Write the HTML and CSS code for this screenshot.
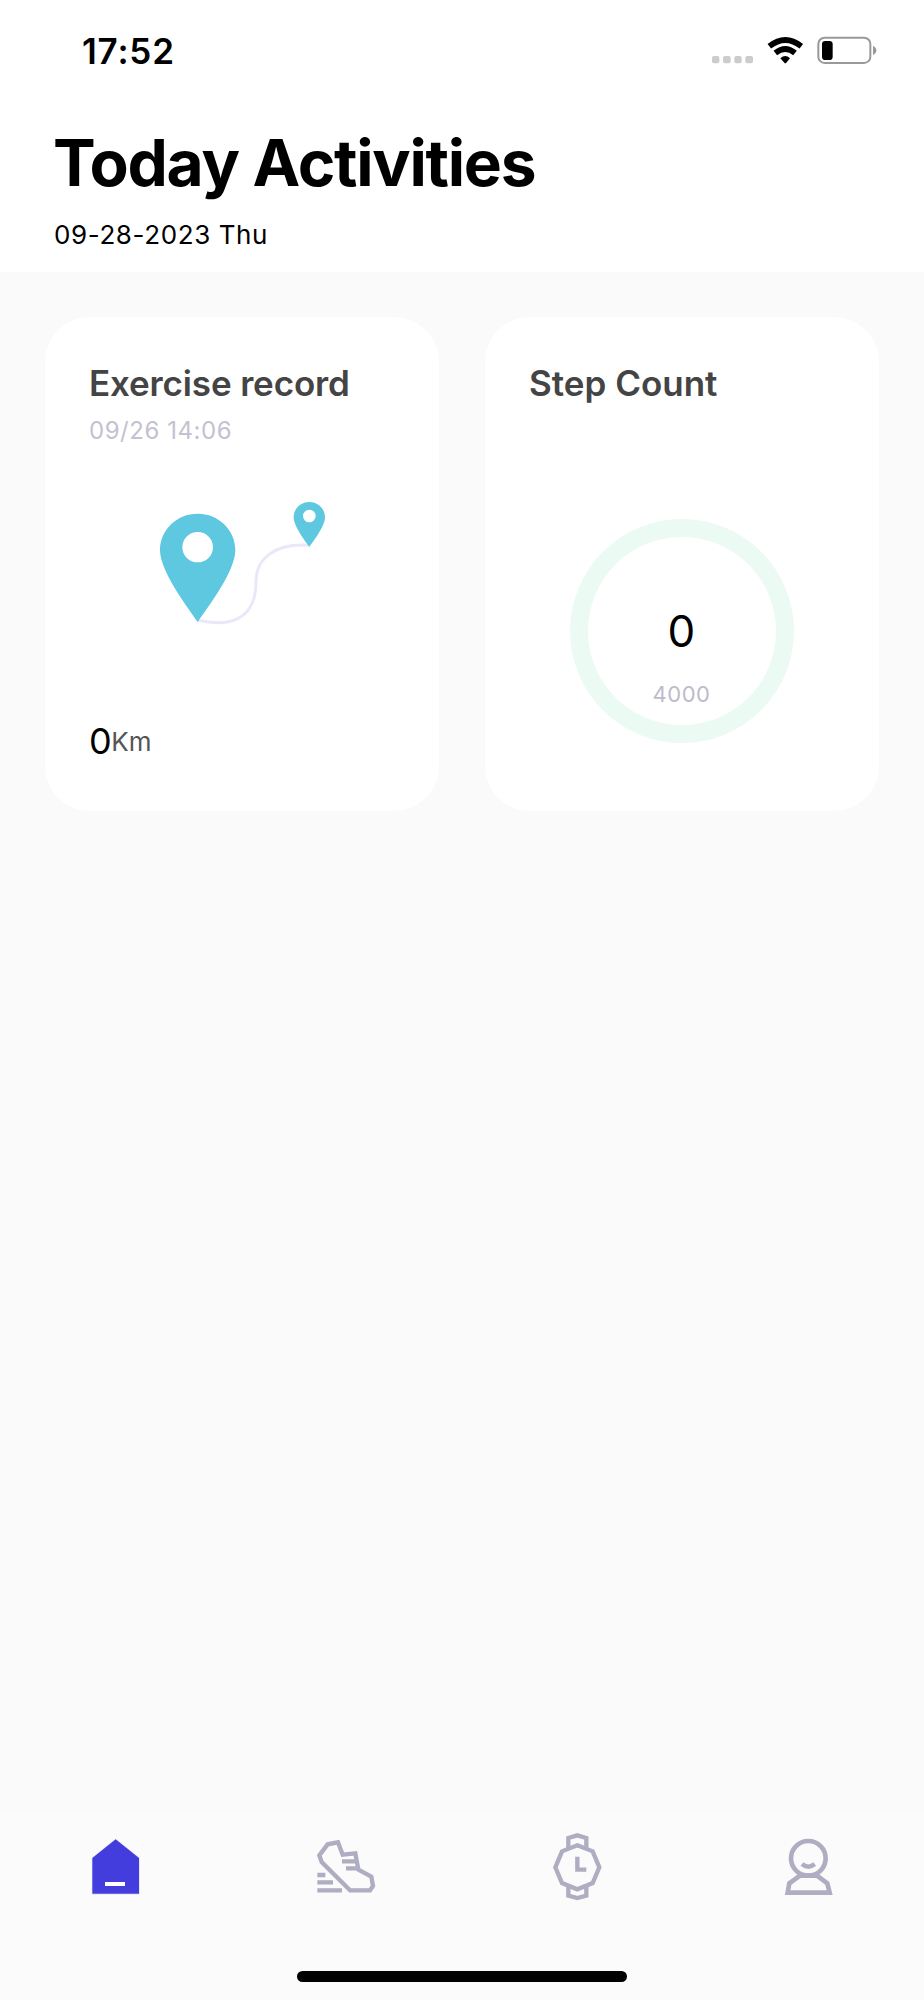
FILE: index.html
```html
<!DOCTYPE html>
<html lang="en">
<head>
<meta charset="utf-8">
<title>Today Activities</title>
<link rel="stylesheet" href="styles.css">
</head>
<body>
<div class="screen">
  <header class="header">
    <div class="status">
      <span class="time">17:52</span>
      <svg class="status-icons" viewBox="0 0 630 180" aria-hidden="true">
        <g fill="#ccc"><rect x="66" y="108" width="22" height="22" rx="6"/><rect x="99" y="108" width="23" height="22" rx="6"/><rect x="133" y="108" width="22" height="22" rx="6"/><rect x="166" y="108" width="23" height="22" rx="6"/></g>
        <g fill="none" stroke="#000" stroke-width="17"><path d="M238 79Q286 41 334 79"/><path d="M256 99Q286 75 315 99"/></g>
        <path d="M271 115Q286 101 300 115L289 128Q286 131 283 128Z"/>
        <rect x="385" y="53" width="156" height="76" rx="19" fill="none" stroke="#999" stroke-width="6"/>
        <rect x="396" y="63" width="32" height="57" rx="10"/>
        <path d="M549 77Q559 82 559 91T549 105Z" fill="#999"/>
      </svg>
    </div>
    <h1 class="title">Today Activities</h1>
    <p class="date">09-28-2023 Thu</p>
  </header>
  <main class="cards">
    <section class="card">
      <h2 class="card-title card-title-exercise">Exercise record</h2>
      <p class="card-sub">09/26 14:06</p>
      <svg class="route" viewBox="0 0 630 480" aria-hidden="true">
        <path d="M173 421C260 440 348 427 348 305C348 235 405 189 508 196" fill="none" stroke="#eae7fa" stroke-width="9"/>
        <path fill="#5ec8e0" fill-rule="evenodd" d="M173 426C139 378 60 272 60 211C60 149 111 101 173 101S286 149 286 211C286 272 207 378 173 426ZM173 156a46 45.500 0 1 0 0 91a46 45.500 0 1 0 0-91Z"/>
        <path fill="#5ec8e0" fill-rule="evenodd" d="M508 201C494 181 461 138 461 112C461 86 482 66 508 66S555 86 555 112C555 138 522 181 508 201ZM508 89a19 19 0 1 0 0 38a19 19 0 1 0 0-38Z"/>
      </svg>
      <p class="distance"><span class="distance-value">0</span><span class="distance-unit">Km</span></p>
    </section>
    <section class="card">
      <h2 class="card-title card-title-steps">Step Count</h2>
      <div class="ring">
        <span class="steps">0</span>
        <span class="goal">4000</span>
      </div>
    </section>
  </main>
  <footer class="footer">
    <nav class="nav">
      <a class="tab"><svg class="tab-icon" viewBox="3 60 270 270"><path fill="#fff" stroke="#dddcf8" stroke-width="3" d="M137 118L207.500 174V282H67V174Z"/><path fill="#443dde" d="M137 118L207 174V281H67V174Z"/><path fill="#fff" d="M105 246H165V258H105Z"/></svg></a>
      <a class="tab"><svg class="tab-icon" viewBox="6 0 270 270"><g fill="none" stroke="#aeadc1" stroke-width="13"><path d="M150 211L65 126L58 106L83 73L114 67L128 104L166 100L175 149L214 170L219 198L210 211Z"/><path d="M126 124H168M138 145H174M52 165H76M52 187H99M52 211H126"/></g></svg></a>
      <a class="tab"><svg class="tab-icon" viewBox="-6 0 270 270"><g fill="none" stroke="#aeadc1" stroke-width="13"><path d="M127 76L173 94L193 142L173 189L127 208L81 189L61 142L81 94Z"/><path d="M100 86V54L127 46L154 54V86M100 198V227L127 234L154 227V198"/><path d="M127 110V149H154" stroke-width="13"/></g></svg></a>
      <a class="tab"><svg class="tab-icon" viewBox="-3 0 270 270"><g fill="none" stroke="#aeadc1" stroke-width="14"><circle cx="130" cy="115" r="52"/><path d="M105 167H156L187 190L194 218H68L73 190Z"/><path d="M111 132Q130 148 149 132" stroke-width="13"/></g></svg></a>
    </nav>
    <div class="home-bar"></div>
  </footer>
</div>
</body>
</html>
```
FILE: styles.css
```css
* { box-sizing: border-box; }
body { margin: 0; background: #fafafa; color: #000; font-family: Inter, "Liberation Sans", sans-serif; }
h1, h2, p { margin: 0; }
.screen { width: 924px; height: 2000px; display: flex; flex-direction: column; }
.header { height: 272px; flex: none; background: #fff; }
.status { height: 100px; display: flex; justify-content: space-between; align-items: flex-start; padding: 20px 24px 0 82px; }
.time { font-size: 35px; line-height: 62px; font-weight: 600; letter-spacing: 0.8px; }
.status-icons { width: 210px; height: 60px; }
.title { padding: 23px 0 0 53px; font-size: 64px; line-height: 80px; font-weight: 700; letter-spacing: -1.25px; }
.date { padding: 14px 0 0 54px; font-size: 26px; line-height: 36px; letter-spacing: 0.6px; }
.cards { display: grid; grid-template-columns: 394px 394px; gap: 46px; padding: 45px; flex: 1; align-items: start; }
.card { height: 494px; padding: 44px 45px 0 44px; border-radius: 45px; background: #fff; display: flex; flex-direction: column; }
.card-title { color: #444; font-size: 35px; line-height: 44px; font-weight: 600; white-space: nowrap; }
.card-title-exercise { letter-spacing: -0.15px; }
.card-title-steps { letter-spacing: 0; }
.card-sub { margin-top: 10px; color: #c4c2d1; font-size: 24px; line-height: 32px; letter-spacing: 0.55px; }
.route { width: 210px; height: 160px; margin: 33px 0 0 51px; flex: none; }
.distance { display: flex; align-items: center; margin-top: 78px; height: 46px; }
.distance-value { font-size: 36px; letter-spacing: -0.5px; }
.distance-unit { color: #555; font-size: 26px; }
.ring { width: 224px; height: 224px; margin: 114px auto 0; flex: none; border: 18px solid #ecfaf4; border-radius: 50%; display: flex; flex-direction: column; align-items: center; padding-top: 66px; }
.steps { font-size: 44px; line-height: 56px; }
.goal { color: #bdbbcb; font-size: 22px; line-height: 30px; margin-top: 20px; letter-spacing: 0.5px; }
.footer { height: 188px; flex: none; border-top: 1px solid #f9f9f9; background: #fbfbfb; }
.nav { display: grid; grid-template-columns: repeat(4, 1fr); padding-top: 7px; }
.tab { display: flex; justify-content: center; }
.tab-icon { width: 90px; height: 90px; }
.home-bar { width: 330px; height: 11px; margin: 61px auto 0; border-radius: 6px; background: #000; }
```
